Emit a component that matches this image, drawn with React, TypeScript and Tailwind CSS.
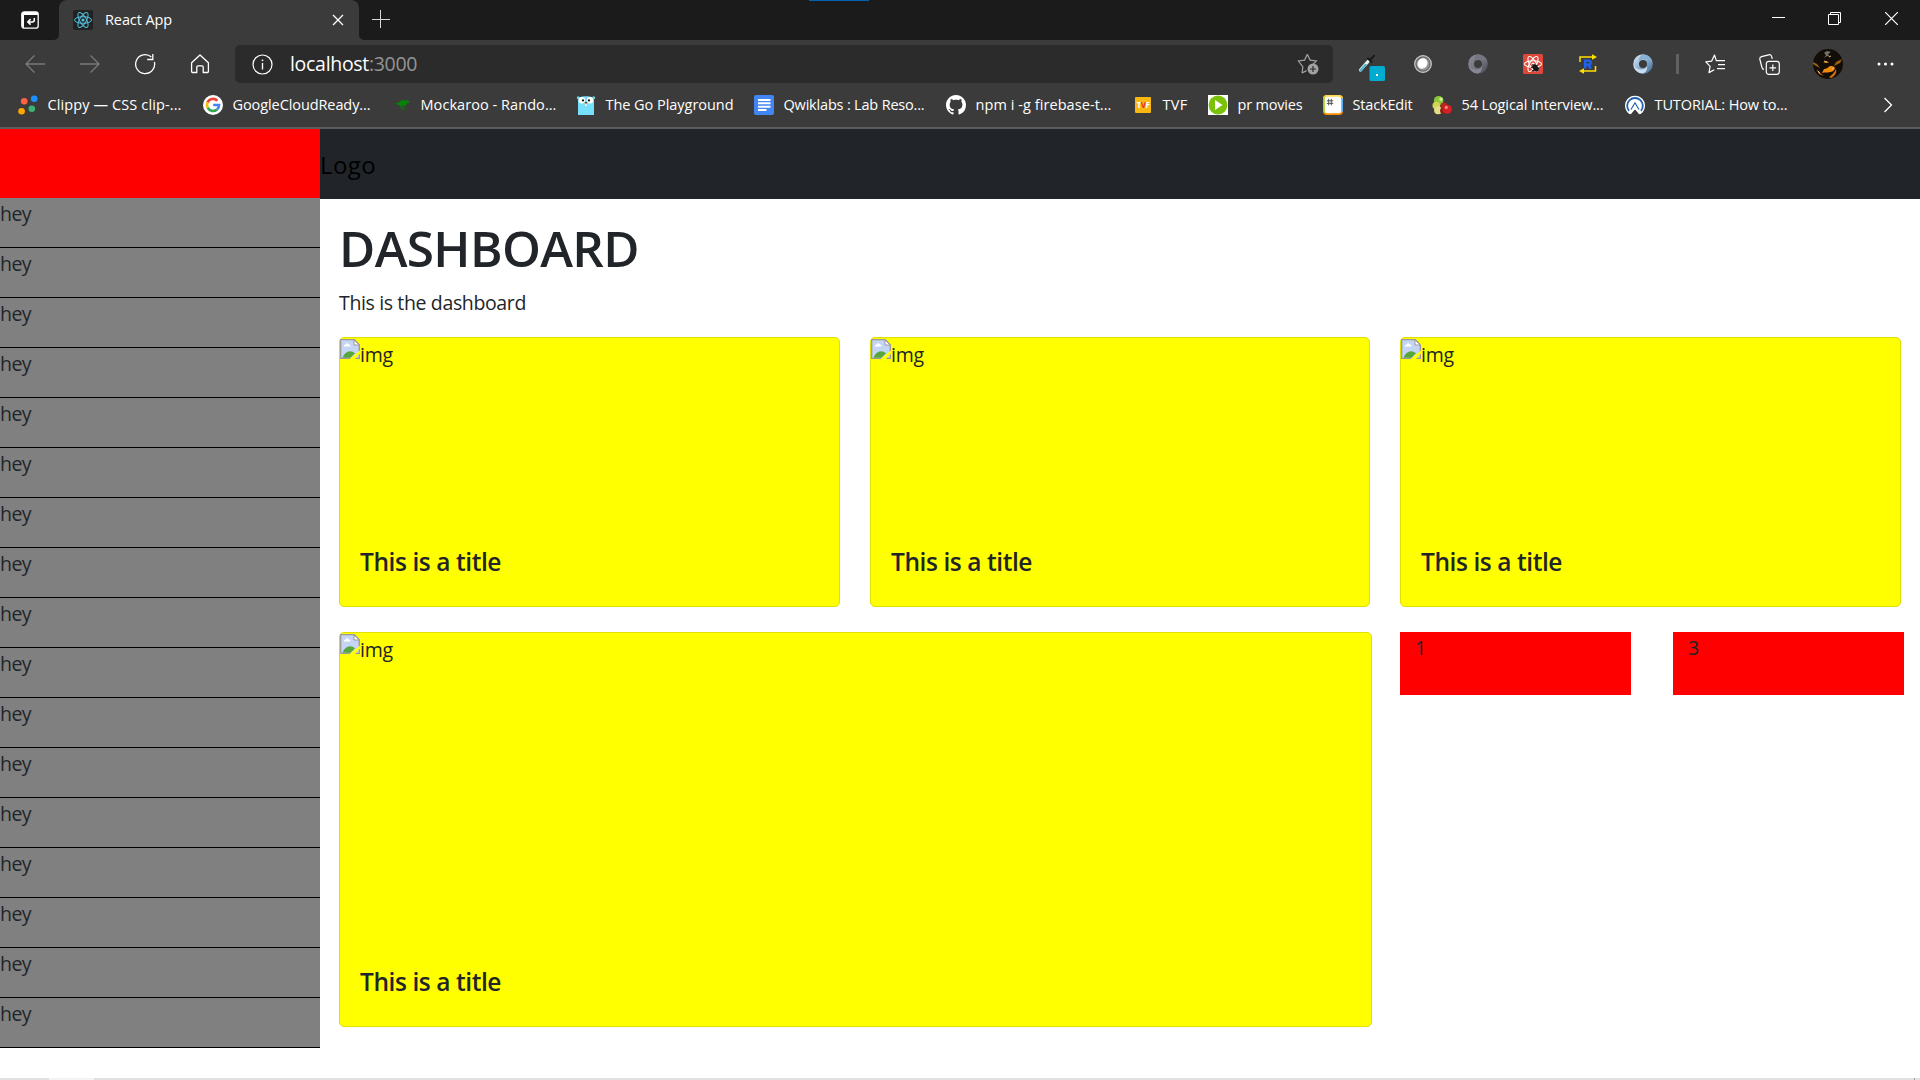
import React, { useLayoutEffect, useRef, useState } from "react";

const SANS = "font-['Open_Sans','Noto_Sans',sans-serif]";

/** Single-line label whose tracking is tuned so it spans exactly `width` pixels. */
function Label({ text, width, className = "" }: { text: string; width: number; className?: string }) {
  const ref = useRef<HTMLSpanElement>(null);
  const [tracking, setTracking] = useState(0);
  useLayoutEffect(() => {
    if (!ref.current) return;
    const natural = ref.current.getBoundingClientRect().width;
    setTracking((width - natural) / text.length);
  }, [text, width]);
  return (
    <span ref={ref} className={`inline-block whitespace-nowrap ${className}`} style={{ letterSpacing: `${tracking}px` }}>
      {text}
    </span>
  );
}

function ReactMark({ color, width = 1 }: { color: string; width?: number }) {
  return (
    <g fill="none" stroke={color} strokeWidth={width}>
      <ellipse cx="10" cy="10" rx="8.5" ry="3.3" />
      <ellipse cx="10" cy="10" rx="8.5" ry="3.3" transform="rotate(60 10 10)" />
      <ellipse cx="10" cy="10" rx="8.5" ry="3.3" transform="rotate(120 10 10)" />
      <circle cx="10" cy="10" r="1.6" fill={color} stroke="none" />
    </g>
  );
}

function Swirl({ id, dark, mid, light }: { id: string; dark: string; mid: string; light: string }) {
  return (
    <svg width="20" height="20" viewBox="0 0 20 20">
      <defs>
        <linearGradient id={id} x1="0" y1="0" x2="1" y2="1">
          <stop offset="0" stopColor={light} />
          <stop offset="0.5" stopColor={mid} />
          <stop offset="1" stopColor={dark} />
        </linearGradient>
      </defs>
      <circle cx="10" cy="10" r="6.900" fill="none" stroke={`url(#${id})`} strokeWidth="5.800" />
      <path d="M10 .4A9.6 9.6 0 0 1 19.6 10c-1.500-4-4-5-7-5.300C10 4.500 7.500 5 6 8 5.500 4 7 1.500 10 .4Z" fill={mid} />
      <path d="M10 19.600A9.600 9.600 0 0 1 .4 10c1.500 4 4 5.200 7 5.500 3 .2 5.500-.8 6.500-3.500.6 4-1 6.500-3.900 7.600Z" fill={light} />
    </svg>
  );
}

function TabActionsIcon() {
  return (
    <svg width="18" height="18" viewBox="0 0 18 18" fill="none">
      <rect x="0.800" y="0.800" width="16.400" height="16.400" rx="2.500" stroke="#fff" strokeWidth="1.300" />
      <path d="M1 3.200C1 1.700 1.900 1 3.200 1h11.600C16.200 1 17 1.800 17 3.200V4H3v13C1.600 17 1 16 1 14.500Z" fill="#fff" />
      <path d="M13.300 7v2c0 1.200-.7 1.900-1.900 1.900H7.200M9.600 8.100l-2.800 2.800 2.800 2.700" stroke="#fff" strokeWidth="1.500" />
    </svg>
  );
}

const bookmarks: { text: string; width: number; cell: string; icon: React.ReactNode }[] = [
  {
    text: "Clippy — CSS clip-...", width: 134, cell: "w-[185px]",
    icon: (
      <svg width="20" height="20" viewBox="0 0 20 20">
        <circle cx="16.200" cy="3.800" r="3.300" fill="#1e90ff" /><circle cx="6.200" cy="6.200" r="3.300" fill="#ff6347" />
        <circle cx="13.800" cy="13.800" r="3.300" fill="#3cb371" /><circle cx="3.600" cy="16.300" r="3.300" fill="#ffa500" />
      </svg>
    ),
  },
  {
    text: "GoogleCloudReady...", width: 138, cell: "w-[188px]",
    icon: (
      <svg width="20" height="20" viewBox="0 0 20 20">
        <circle cx="10" cy="10" r="10" fill="#fff" />
        <g fill="none" strokeWidth="2.700">
          <path d="M4.600 7.300A6 6 0 0 1 14.300 5.800" stroke="#ea4335" />
          <path d="M4.700 12.700a6 6 0 0 1-.1-5.400" stroke="#fbbc05" />
          <path d="M14 14.500a6 6 0 0 1-9.300-1.800" stroke="#34a853" />
          <path d="M10.200 10h5.800c0 2-.8 3.500-2 4.500" stroke="#4285f4" />
        </g>
      </svg>
    ),
  },
  {
    text: "Mockaroo - Rando...", width: 136, cell: "w-[185px]",
    icon: (
      <svg width="20" height="20" viewBox="0 0 20 20">
        <path d="M1.500 8.400c3 .6 5.500-.3 8-2.500 2.200-1.600 4.600-.8 6 .2l1.500-1.500.6 1.600 1.400 1.500-2.600.5c-.6 1.300-1.700 2-3 2.300l.8 2-.9.300-1.300-2.400-1.900.4 1.900 3 2 .4-.2.600-3-.2-2.100-4.100c-2-1.300-4.700-1.700-7.200-2.100Z" fill="#078207" />
      </svg>
    ),
  },
  {
    text: "The Go Playground", width: 128, cell: "w-[178px]",
    icon: (
      <svg width="20" height="20" viewBox="0 0 20 20">
        <path d="M2 20V6C2 2.500 5 1.200 10 1.200S18 2.500 18 6v14Z" fill="#74e0fb" />
        <circle cx="2.300" cy="2.800" r="1.500" fill="#6ad7e5" /><circle cx="17.700" cy="2.800" r="1.500" fill="#6ad7e5" />
        <circle cx="5.800" cy="5.200" r="3.200" fill="#fff" /><circle cx="14" cy="5.200" r="3.200" fill="#fff" />
        <circle cx="7" cy="5.400" r="1.100" fill="#111" /><circle cx="13" cy="5.400" r="1.100" fill="#111" />
        <path d="M8.300 7.800h3.400v1.500H8.300Z" fill="#e7b98f" /><path d="M8.900 7.200h2.200v1H8.900Z" fill="#222" /><path d="M9.200 9.300h1.600v1.600H9.200Z" fill="#fff" />
      </svg>
    ),
  },
  {
    text: "Qwiklabs : Lab Reso...", width: 141, cell: "w-[192px]",
    icon: (
      <svg width="20" height="20" viewBox="0 0 20 20">
        <rect width="20" height="20" rx="2" fill="#4285f4" />
        <path d="M4 5h12.500M4 8.300h12.500M4 11.700h12.500M4 15h8.500" stroke="#fff" strokeWidth="1.900" />
      </svg>
    ),
  },
  {
    text: "npm i -g firebase-t...", width: 136, cell: "w-[187px]",
    icon: (
      <svg width="20" height="20" viewBox="0 0 16 16" fill="#fff">
        <path d="M8 0C3.580 0 0 3.580 0 8c0 3.540 2.290 6.530 5.470 7.590.4.070.55-.17.55-.38 0-.19-.01-.82-.01-1.490-2.010.37-2.530-.49-2.690-.94-.09-.23-.48-.94-.82-1.130-.28-.15-.68-.52-.01-.53.63-.01 1.080.58 1.230.82.72 1.210 1.870.87 2.330.66.070-.52.280-.87.510-1.070-1.780-.2-3.640-.89-3.640-3.950 0-.87.310-1.590.82-2.150-.08-.2-.36-1.020.08-2.120 0 0 .67-.21 2.200.82.64-.18 1.320-.27 2-.27s1.360.09 2 .27c1.530-1.040 2.200-.82 2.200-.82.44 1.100.16 1.920.08 2.120.51.56.82 1.270.82 2.150 0 3.070-1.870 3.750-3.650 3.950.29.25.54.73.54 1.480 0 1.070-.01 1.930-.01 2.200 0 .21.15.46.55.38A8.010 8.010 0 0 0 16 8c0-4.420-3.580-8-8-8Z" />
      </svg>
    ),
  },
  {
    text: "TVF", width: 25, cell: "w-[75px]",
    icon: (
      <span className="ml-0.5 flex h-4 w-4 items-center justify-center rounded-[1px] bg-[#f8b810] text-[8px] font-bold tracking-[-0.5px] text-white">
        T<span className="text-[#e03020]">V</span>F
      </span>
    ),
  },
  {
    text: "pr movies", width: 65, cell: "w-[115px]",
    icon: (
      <svg width="20" height="20" viewBox="0 0 20 20">
        <path d="M0 0h20v20H0Z" fill="#fff" /><circle cx="10" cy="10" r="9.400" fill="#7ac20a" /><path d="M7 5l7.500 5L7 15Z" fill="#fff" />
      </svg>
    ),
  },
  {
    text: "StackEdit", width: 60, cell: "w-[109px]",
    icon: (
      <svg width="20" height="20" viewBox="0 0 20 20">
        <rect width="20" height="20" rx="4" fill="#ff8f00" />
        <path d="M4 0h12a4 4 0 0 1 4 4l-2 2H2L0 4a4 4 0 0 1 4-4Z" fill="#ffd84d" />
        <path d="M0 16V4L2 1.500v17Z" fill="#a4cd1c" /><path d="M20 4v12l-2 2.500v-17Z" fill="#59aef7" />
        <rect x="1.800" y="1.800" width="16.400" height="16.400" rx="2.500" fill="#fff" />
        <path d="M5.700 3.800v6.600M8.300 3.800v6.600M3.800 5.800h6.400M3.800 8.400h6.400" stroke="#555" strokeWidth="1" />
      </svg>
    ),
  },
  {
    text: "54 Logical Interview...", width: 142, cell: "w-[193px]",
    icon: (
      <svg width="20" height="20" viewBox="0 0 21 20">
        <circle cx="7" cy="5.500" r="5" fill="#8cc63a" /><circle cx="9.500" cy="4" r="1.800" fill="#d2ef95" />
        <circle cx="4.500" cy="10.500" r="4" fill="#d3d456" /><circle cx="6.500" cy="15.500" r="4.300" fill="#e3df86" />
        <circle cx="12.500" cy="11" r="3.600" fill="#b52a18" /><circle cx="11.500" cy="16" r="3" fill="#8f1e17" />
        <circle cx="16" cy="14.500" r="4.800" fill="#d91f26" /><circle cx="15" cy="12.500" r="1.600" fill="#f58d86" />
      </svg>
    ),
  },
  {
    text: "TUTORIAL: How to...", width: 133, cell: "w-[170px]",
    icon: (
      <svg width="20" height="20" viewBox="0 0 20 20">
        <path d="M4.500 19A10 10 0 1 1 15.500 19l-1.800-3L10 11.500 6.300 16Z" fill="#fff" />
        <path d="M4 15.800A7.800 7.800 0 1 1 16 15.800" fill="none" stroke="#1f5fae" strokeWidth="1.800" />
        <path d="M3.800 18.500 10 7.500l6.200 11-2 .8L10 14.500 5.800 19.300Z" fill="#fff" />
        <path d="M6 14.500 10 7.800l4 6.700" fill="none" stroke="#1f5fae" strokeWidth="1.200" />
        <path d="M7 18.500 10 15l3 3.500Z" fill="#3b3b3b" />
      </svg>
    ),
  },
];

const cellClass = "flex w-[55px] shrink-0 items-center justify-center";

function TitleBar() {
  return (
    <div className="relative flex h-10 bg-[#1b1b1b]">
      <div className="absolute top-0 left-[809px] h-px w-[60px] bg-[#0062b1]" />
      <div className="flex w-[59px] items-center pl-[21px]"><TabActionsIcon /></div>
      <div className="relative flex w-[300px] items-center rounded-t-lg bg-[#3b3b3b] pl-[14px]">
        <svg width="20" height="20" viewBox="0 0 20 20">
          <rect width="20" height="20" rx="2" fill="#222" /><ReactMark color="#53c1de" />
        </svg>
        <Label text="React App" width={67} className="ml-3 text-[14.5px] leading-5 text-white" />
        <svg className="mr-[15px] ml-auto" width="12" height="12" viewBox="0 0 12 12"><path d="m1 1 10 10M11 1 1 11" stroke="#fff" strokeWidth="1.300" /></svg>
        <svg className="absolute bottom-0 -left-[5px]" width="5" height="5"><path d="M5 0v5H0a5 5 0 0 0 5-5Z" fill="#3b3b3b" /></svg>
        <svg className="absolute -right-[5px] bottom-0" width="5" height="5"><path d="M0 0v5h5a5 5 0 0 1-5-5Z" fill="#3b3b3b" /></svg>
      </div>
      <svg className="mt-[10px] ml-[13px]" width="18" height="18" viewBox="0 0 18 18"><path d="M8.500 0v18M0 9.500h18" stroke="#d8d8d8" /></svg>
      <div className="mt-3 mr-[22px] ml-auto flex gap-[43px]">
        <svg width="13" height="13" viewBox="0 0 13 13"><path d="M0 5.500h13" stroke="#fff" /></svg>
        <svg width="14" height="13" viewBox="0 0 14 13" fill="none" stroke="#fff"><path d="M.5 2.500h10v10H.5ZM2.500 2V.5h10v10H11" /></svg>
        <svg width="13" height="13" viewBox="0 0 13 13"><path d="m0 0 13 13M13 0 0 13" stroke="#fff" strokeWidth="1.200" /></svg>
      </div>
    </div>
  );
}

function Toolbar() {
  return (
    <div className="flex h-[48px] bg-[#3b3b3b] pt-[5px] pl-[7px]">
      <div className="flex h-[38px]">
        <div className={cellClass}>
          <svg width="20" height="18" viewBox="0 0 20 18" fill="none" stroke="#7a7a7a" strokeWidth="1.300"><path d="M20 9H1M9.500.5 1 9l8.500 8.500" /></svg>
        </div>
        <div className={cellClass}>
          <svg width="20" height="18" viewBox="0 0 20 18" fill="none" stroke="#7a7a7a" strokeWidth="1.300"><path d="M0 9h19M10.500.5 19 9l-8.500 8.500" /></svg>
        </div>
        <div className={cellClass}>
          <svg width="22" height="22" viewBox="0 0 22 22" fill="none" stroke="#fff" strokeWidth="1.300"><path d="M17.400 4A9.500 9.500 0 1 0 20.400 9M18.800 1v5.500h-5.600" /></svg>
        </div>
        <div className={cellClass}>
          <svg width="20" height="20" viewBox="0 0 20 20" fill="none" stroke="#fff" strokeWidth="1.300" strokeLinejoin="round"><path d="M1.600 8.800 10 1l8.400 7.800V17.500q0 1-1 1h-4.200v-5.500q0-1.200-1.200-1.200H8q-1.200 0-1.200 1.200v5.500H2.600q-1 0-1-1Z" /></svg>
        </div>
      </div>
      <div className="ml-2 flex h-[38px] w-[1098px] items-center rounded-[5px] bg-[#2b2b2b] pl-[17px]">
        <svg width="21" height="21" viewBox="0 0 21 21" fill="none" stroke="#fff" strokeWidth="1.200"><circle cx="10.500" cy="10.500" r="9.500" /><path d="M10.500 9v6.500" strokeWidth="1.400" /><circle cx="10.500" cy="6.300" r=".9" fill="#fff" stroke="none" /></svg>
        <div className="ml-[17px] flex text-[19.5px] leading-6">
          <Label text="localhost" width={79} className="text-white" />
          <Label text=":3000" width={48} className="text-[#949494]" />
        </div>
        <svg className="mr-[14px] ml-auto" width="22" height="22" viewBox="0 0 22 22">
          <path d="M10.300 1.300l2.800 5.800 6.300.9-4.500 4.400.2 1.500M5 20l.9-6.200L1.400 8l6.200-.9 2.700-5.800M5 20l4.500-2.400" fill="none" stroke="#a2a2a2" strokeWidth="1.200" />
          <circle cx="16" cy="16" r="5.500" fill="#a2a2a2" /><path d="M16 13v6M13 16h6" stroke="#2b2b2b" strokeWidth="1.200" />
        </svg>
      </div>
      <div className="ml-[7px] flex h-[38px]">
        <div className={cellClass}>
          <svg className="mt-[7px] ml-[8px]" width="28" height="28" viewBox="0 0 28 28">
            <path d="M2.500 16 10 7.500" stroke="#e9f4f6" strokeWidth="3.200" strokeLinecap="round" /><path d="M2.500 16.500 7.500 11" stroke="#55b5cc" strokeWidth="2.400" strokeLinecap="round" />
            <path d="m10 4.500 3.500 3.500M12 6l4-4.200" stroke="#191919" strokeWidth="2" strokeLinecap="round" />
            <rect x="11.500" y="12" width="15.500" height="15" rx="1.500" fill="#00accf" /><rect x="18" y="20" width="2" height="2" fill="#fff" />
          </svg>
        </div>
        <div className={cellClass}>
          <svg width="18" height="18" viewBox="0 0 18 18"><circle cx="9" cy="9" r="8.300" fill="#6c6c6c" stroke="#ccc" strokeWidth="1.200" /><circle cx="9" cy="9" r="6.400" fill="#969696" /><ellipse cx="8.500" cy="8.500" rx="4.800" ry="5.400" fill="#fff" transform="rotate(35 8.500 8.500)" /></svg>
        </div>
        <div className={cellClass}><Swirl id="swirl-grey" dark="#55565e" mid="#74757f" light="#858792" /></div>
        <div className={cellClass}>
          <svg width="20" height="20" viewBox="0 0 20 20">
            <rect width="20" height="20" rx="1.500" fill="#de4839" /><ReactMark color="#fff" width={1.1} />
            <ellipse cx="12.500" cy="14" rx="2.600" ry="4" transform="rotate(-35 12.500 14)" fill="#161616" /><path d="M8 13.500l7-2.500M9 17l7-3M9.500 10l1.500 2" stroke="#161616" strokeWidth="1.200" />
          </svg>
        </div>
        <div className={cellClass}>
          <svg width="20" height="20" viewBox="0 0 20 20">
            <path d="M2 8V3h12M17.500 12v5H5" fill="none" stroke="#ffe000" strokeWidth="1.500" /><path d="m14 .2 5 2.800-5 2.800ZM6 14.200l-5 2.800 5 2.800Z" fill="#ffe000" />
            <path d="M7.200 14.500V6.600h3.400a2.100 2.100 0 0 1 0 4.200H7.500M10.300 10.800l2.600 3.700" fill="none" stroke="#1f62ef" strokeWidth="2.400" />
          </svg>
        </div>
        <div className={cellClass}><Swirl id="swirl-blue" dark="#52799f" mid="#88afd3" light="#cbdcec" /></div>
      </div>
      <div className="mt-[9px] ml-[6px] h-5 w-[3px] bg-[#616161]" />
      <div className="ml-2 flex h-[38px]">
        <div className={cellClass}>
          <svg width="20" height="20" viewBox="0 0 20 20" fill="none" stroke="#fff" strokeWidth="1.200" strokeLinejoin="round"><path d="M13 6.700 11.300 6.600 9.500 1 6.700 7.100.8 7.900l4.300 4.500L4 18.600l5.300-2.900M13 6.700h7M13 10.700h7M12 14.700h8" /></svg>
        </div>
        <div className={cellClass}>
          <svg width="21" height="21" viewBox="0 0 21 21" fill="none" stroke="#fff" strokeWidth="1.200"><rect x="7.300" y="7.300" width="13" height="13" rx="2.500" /><path d="M13.800 10.500v6.600M10.500 13.800h6.600M5 15.500q-1.500-.3-2-2L.9 5.500Q.4 3.300 2.500 2.600L9.700.8q2.200-.5 2.900 1.600l.7 2.500" /></svg>
        </div>
        <div className={`${cellClass} pl-[7px]`}>
          <svg width="30" height="30" viewBox="0 0 30 30">
            <defs><clipPath id="avatar"><circle cx="15" cy="15" r="15" /></clipPath></defs>
            <g clipPath="url(#avatar)">
              <path d="M0 0h30v30H0Z" fill="#130d08" />
              <path d="M11 4l3-2 4 1-3 2 2 3-3-1-3 2 2-3Z" fill="#70736a" />
              <path d="M0 13l4 2 3 4-4-2-3-2ZM29 10l-6 3-2 4 6-3Z" fill="#9d610d" />
              <path d="M11 20c3 0 4-2 6-3 2 0 4 0 5 2-1 3-3 4-5 4-3 1-5 0-8 1Z" fill="#f08a0c" />
              <path d="M16 28c3-2 5-4 7-8 1 4-1 7-5 9ZM3 20l3 3 5 4-5-2ZM10 14l4-2 2 2Z" fill="#cf700b" />
              <path d="M11 12l3 1M16 8l2-1M19 20l2-1M5 22l2 2" stroke="#e9bd69" />
            </g>
          </svg>
        </div>
        <div className={`${cellClass} pl-[11px]`}>
          <svg width="17" height="4" viewBox="0 0 17 4" fill="#fff"><circle cx="2" cy="2" r="1.500" /><circle cx="8.500" cy="2" r="1.500" /><circle cx="15" cy="2" r="1.500" /></svg>
        </div>
      </div>
    </div>
  );
}

function BookmarksBar() {
  return (
    <div className="flex h-[41px] items-center border-b-2 border-[#5c5c5c] bg-[#3b3b3b] pr-[27px] pb-[5px] pl-[18px]">
      {bookmarks.map((b) => (
        <div key={b.text} className={`flex shrink-0 items-center ${b.cell}`}>
          <span className="mr-[9.5px] flex w-5 shrink-0">{b.icon}</span>
          <Label text={b.text} width={b.width} className="text-[14.5px] leading-5 text-white" />
        </div>
      ))}
      <svg className="ml-auto" width="10" height="16" viewBox="0 0 10 16" fill="none" stroke="#fff" strokeWidth="1.300"><path d="m1.500 1 7 7-7 7" /></svg>
    </div>
  );
}

function BrokenImage() {
  return (
    <div className="flex items-start">
      <svg className="mt-px shrink-0" width="20" height="20" viewBox="0 0 20 20">
        <path d="M.7.7h13.600l5 5v13.600H.7Z" fill="#c5d5f6" stroke="#9a9a9a" strokeWidth="1.300" />
        <path d="M14 1v5h5.300Z" fill="#fff" stroke="#9a9a9a" />
        <path d="M3.500 7.500q.5-2 2-2 1.500-2.500 3.500 0 1.500.2 1.500 2Z" fill="#fff" />
        <path d="M2.500 18.700q2.500-6.500 7.500-6.500 3 0 5 2l-4.500 4.500Z" fill="#57a639" />
        <path d="M20 11.500V14.500L15 20H9.500Z" fill="#ffff00" />
      </svg>
      <Label text="img" width={33} className="mt-[2px] text-[19.5px] leading-[30px]" />
    </div>
  );
}

function Card({ className }: { className: string }) {
  return (
    <div className={`flex flex-col justify-between rounded-[5px] border border-[#dfdf00] bg-[#ffff00] ${className}`}>
      <BrokenImage />
      <div className="h-[63px] pl-5">
        <Label text="This is a title" width={141} className="text-[24.5px] leading-[38px] font-semibold" />
      </div>
    </div>
  );
}

export default function App() {
  return (
    <div className={`h-[1080px] w-[1920px] overflow-hidden bg-white text-[#212529] ${SANS}`}>
      <TitleBar />
      <Toolbar />
      <BookmarksBar />
      <div className="flex h-[949px]">
        <aside className="w-80 shrink-0">
          <div className="h-[69px] bg-[#ff0000]" />
          {Array.from({ length: 17 }, (_, i) => (
            <div key={i} className="h-[50px] border-b border-black bg-[#808080] pt-px">
              <Label text="hey" width={31} className="text-[19.5px] leading-[30px]" />
            </div>
          ))}
        </aside>
        <div className="flex-1">
          <header className="flex h-[70px] items-center bg-[#212529] pt-0.5">
            <Label text="Logo" width={56} className="text-[24px] leading-[38px] text-black" />
          </header>
          <main className="pl-[19px]">
            <h1 className="h-20 pt-[19px] text-[49.5px] leading-[60px] font-semibold"><Label text="DASHBOARD" width={300} /></h1>
            <p className="mt-[9px] mb-[19px] h-[30px] text-[19.5px] leading-[30px]"><Label text="This is the dashboard" width={187} /></p>
            <div className="flex">
              <Card className="h-[270px] w-[501px]" />
              <Card className="ml-[30px] h-[270px] w-[500px]" />
              <Card className="ml-[30px] h-[270px] w-[501px]" />
            </div>
            <div className="mt-[25px] flex">
              <Card className="h-[395px] w-[1033px]" />
              <div className="ml-7 flex gap-[42px] text-[19.5px] leading-[30px]">
                <div className="h-[63px] w-[231px] bg-[#ff0000] pt-px pl-[15px]">1</div>
                <div className="h-[63px] w-[231px] bg-[#ff0000] pt-px pl-[15px]">3</div>
              </div>
            </div>
          </main>
        </div>
      </div>
      <div className="flex h-0.5 bg-[#e1e1e1]">
        <div className="ml-[49px] h-full w-[45px] bg-[#f4f4f4]" />
        <div className="mr-[5px] ml-auto h-full w-px bg-[#a5a5a5]" />
      </div>
    </div>
  );
}
